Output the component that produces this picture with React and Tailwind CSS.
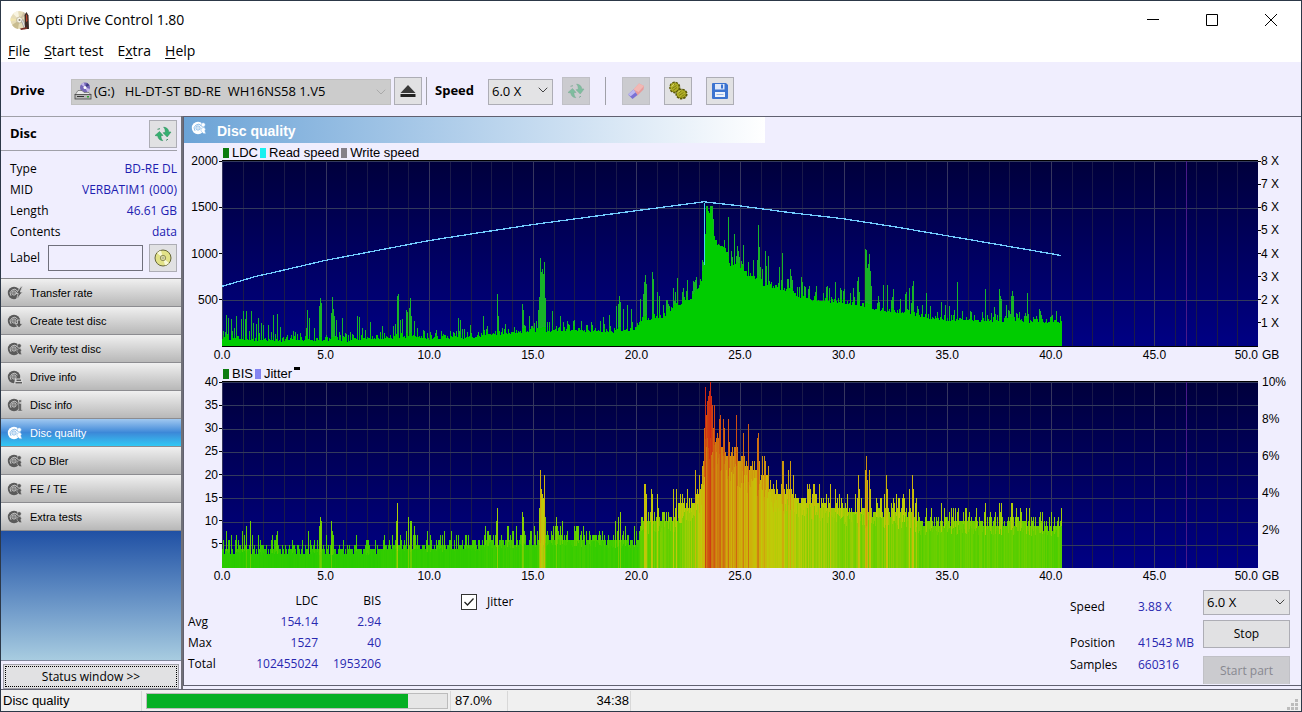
import { ChevronDown } from "lucide-react";

const PLOT_W = 1036;
const PLOT_H = 186;
const LAST_X = 840;

// small seeded generator so the noise floor is the same on every render
function createRandom(seed) {
  let s = seed;
  return () => {
    s = (s * 1664525 + 1013904223) % 4294967296;
    return s / 4294967296;
  };
}

function interpolate(points, x) {
  for (let i = 1; i < points.length; i++) {
    const [x0, y0] = points[i - 1];
    const [x1, y1] = points[i];
    if (x <= x1) return y0 + ((y1 - y0) * (x - x0)) / (x1 - x0);
  }
  return points[points.length - 1][1];
}

const ldcBase = [
  [0, 6], [60, 4], [70, 5], [125, 4], [140, 6], [170, 7], [195, 9], [205, 6], [225, 7], [255, 7], [262, 10], [290, 12],
  [330, 14], [345, 15], [380, 13], [411, 14], [420, 25], [440, 28], [450, 35], [458, 41], [471, 47], [478, 60],
  [482, 80], [483, 112], [484, 134], [489, 134], [491, 112], [494, 102], [503, 98], [507, 80], [518, 78], [525, 70],
  [536, 66], [541, 60], [555, 56], [571, 53], [578, 47], [591, 45], [621, 42], [640, 39], [651, 36], [678, 32],
  [705, 27], [725, 25], [760, 24], [840, 23],
];

const ldcSpikes = [
  [1, 15], [4, 31], [6, 28], [9, 27], [12, 18], [14, 30], [19, 27], [21, 35], [23, 27], [24, 35], [29, 35], [31, 23],
  [34, 22], [36, 28], [39, 23], [41, 21], [46, 21], [51, 31], [55, 32], [58, 19], [71, 15], [84, 18], [85, 36],
  [87, 28], [92, 18], [97, 40], [98, 48], [99, 43], [109, 33], [110, 49], [111, 37], [112, 30], [114, 26], [120, 28],
  [135, 30], [137, 29], [140, 18], [148, 24], [160, 20], [171, 20], [173, 22], [175, 50], [176, 52], [178, 26],
  [180, 27], [184, 36], [185, 34], [187, 38], [188, 48], [189, 30], [192, 25], [201, 16], [208, 14], [234, 15],
  [236, 28], [238, 26], [248, 21], [261, 30], [265, 20], [275, 52], [276, 30], [283, 22], [300, 42], [301, 36],
  [307, 30], [314, 25], [316, 36], [317, 49], [318, 88], [319, 74], [320, 77], [321, 72], [322, 84], [323, 48],
  [325, 24], [330, 35], [338, 30], [345, 25], [352, 26], [381, 29], [387, 31], [394, 40], [396, 42], [397, 50],
  [398, 44], [401, 37], [405, 41], [409, 37], [418, 47], [421, 52], [422, 64], [423, 71], [424, 62], [430, 74],
  [431, 67], [435, 54], [437, 50], [445, 46], [451, 58], [455, 68], [461, 58], [465, 66], [471, 65], [473, 63],
  [480, 86], [481, 84], [484, 138], [486, 136], [490, 141], [491, 128], [506, 130], [512, 113], [516, 96], [521, 102],
  [531, 86], [535, 86], [536, 122], [537, 100], [543, 96], [544, 80], [546, 90], [557, 79], [560, 94], [565, 67],
  [568, 77], [569, 70], [579, 69], [587, 60], [594, 60], [605, 60], [613, 64], [619, 56], [631, 58], [635, 65],
  [636, 69], [643, 98], [644, 97], [645, 78], [646, 82], [647, 92], [648, 75], [649, 60], [656, 50], [661, 61],
  [665, 61], [671, 57], [683, 52], [684, 54], [687, 58], [690, 60], [691, 65], [695, 40], [704, 53], [719, 44],
  [723, 41], [727, 40], [735, 64], [760, 34], [763, 57], [772, 39], [777, 57], [778, 50], [779, 47], [784, 41],
  [786, 36], [789, 50], [790, 55], [791, 50], [805, 53], [806, 32], [819, 31], [830, 31], [834, 35],
];

const bisBase = [
  [0, 4], [155, 4], [160, 5], [255, 5], [262, 6], [315, 6], [330, 6.5], [411, 6], [416, 6], [418, 10], [440, 11], [455, 11],
  [460, 13], [470, 14], [476, 16], [480, 20], [482, 26], [484, 34], [489, 33], [492, 28], [500, 26], [507, 24],
  [520, 24], [530, 21], [540, 20], [550, 17], [570, 16], [575, 15], [600, 14], [620, 13], [650, 12], [690, 12],
  [697, 10], [725, 10], [800, 10], [830, 9], [840, 9.5],
];

const bisSpikes = [
  [1, 6], [4, 8], [6, 6], [9, 7], [14, 7], [20, 8], [22, 7], [24, 9], [28, 10], [30, 7], [36, 7], [50, 7], [54, 7],
  [55, 8], [86, 8], [97, 9], [98, 11], [99, 10], [109, 10], [110, 8], [111, 7], [134, 7], [174, 10], [175, 14],
  [178, 7], [184, 8], [186, 11], [188, 10], [189, 10], [192, 9], [208, 7], [236, 7], [274, 10], [275, 13],
  [286, 9], [300, 12], [301, 11], [312, 9], [317, 13], [318, 21], [319, 17], [320, 16], [321, 15], [322, 20],
  [323, 11], [334, 11], [340, 10], [393, 10], [396, 11], [398, 12], [420, 11], [422, 18], [423, 18], [424, 16],
  [429, 17], [430, 16], [435, 16], [451, 17], [454, 17], [465, 17], [473, 21], [480, 22], [483, 39], [485, 36],
  [486, 37], [487, 38], [488, 40], [489, 37], [490, 35], [492, 35], [498, 33], [501, 32], [502, 30], [506, 32],
  [514, 33], [521, 29], [526, 31], [535, 28], [536, 29], [540, 24], [542, 24], [543, 23], [560, 23], [561, 23],
  [566, 21], [568, 23], [608, 18], [613, 17], [636, 20], [637, 17], [643, 21], [644, 24], [645, 19], [647, 21],
  [648, 17], [662, 16], [664, 20], [665, 17], [671, 15], [674, 16], [687, 17], [690, 20], [691, 17], [694, 15],
  [704, 13], [719, 14], [733, 13], [763, 14], [777, 14], [779, 14], [789, 14], [790, 14], [807, 13],
];

function buildBars(base, spikes, seed, max, noise) {
  const random = createRandom(seed);
  const tall = new Map(spikes);
  const bars = [];
  for (let x = 0; x < LAST_X; x++) {
    const floor = interpolate(base, x);
    bars.push(Math.min(max, Math.max(floor + noise(random(), floor), tall.get(x) ?? 0)));
  }
  return bars;
}

const ldcBars = buildBars(ldcBase, ldcSpikes, 7, 141, (r, floor) => r * 4 + r ** 5 * (5 + floor * 0.2));
const bisBars = buildBars(bisBase, bisSpikes, 21, 40, (r, floor) => r * 2 - 0.4 + r ** 4 * (1 + floor * 0.14)).map(
  Math.floor
);

const heat = [
  [0, [20, 200, 0]],
  [5, [52, 204, 0]],
  [10, [112, 208, 0]],
  [15, [190, 204, 8]],
  [20, [206, 178, 10]],
  [26, [206, 128, 16]],
  [33, [208, 80, 16]],
  [40, [206, 36, 20]],
];

function heatColor(value) {
  const channel = (c) =>
    Math.round(interpolate(heat.map(([v, rgb]) => [v, rgb[c]]), value));
  return `rgb(${channel(0)} ${channel(1)} ${channel(2)})`;
}

const readSpeed =
  "0,126 17,121 34,116 52,112 69,108 86,104 103,100 129,95 155,90 181,85 207,80 258,72 310,64 362,57 414,50 482,41 517,45 569,52 621,58 672,66 724,75 776,84 828,93 839,95";

function PlotFrame({ id, rows, children }) {
  return (
    <svg
      viewBox={`0 0 ${PLOT_W} ${PLOT_H}`}
      preserveAspectRatio="none"
      className="block w-full h-full"
      shapeRendering="crispEdges"
      aria-hidden="true"
    >
      <defs>
        <linearGradient id={id} x1="0" y1="0" x2="0" y2="1">
          <stop offset="0" stopColor="#00003c" />
          <stop offset="1" stopColor="#000084" />
        </linearGradient>
      </defs>
      <rect width={PLOT_W} height={PLOT_H} fill={`url(#${id})`} />
      {Array.from({ length: 50 }, (_, i) => (
        <rect
          key={i}
          x={Math.round((i * PLOT_W) / 50)}
          width="1"
          height={PLOT_H}
          fill={i % 5 === 0 ? "#36365e" : "#1a1a4a"}
        />
      ))}
      {Array.from({ length: rows }, (_, i) => (
        <rect
          key={i}
          y={Math.round((i * PLOT_H) / rows)}
          width={PLOT_W}
          height="1"
          fill="#333a5c"
        />
      ))}
      <rect x="964" width="1" height={PLOT_H} fill="#4a1a88" />
      {children}
    </svg>
  );
}

function LdcPlot() {
  return (
    <PlotFrame id="ldc-bg" rows={4}>
      {ldcBars.map((h, x) => {
        const floor = interpolate(ldcBase, x) + 5;
        const top = Math.round(h);
        const solid = Math.round(Math.min(h, floor));
        return (
          <g key={x}>
            <rect x={x} y={PLOT_H - top} width="1" height={top} fill="#18b428" />
            <rect x={x} y={PLOT_H - solid} width="1" height={solid} fill="#00cc00" />
          </g>
        );
      })}
      <rect x="482" y="42" width="1" height="63" fill="#40d8f0" />
      <polyline points={readSpeed} fill="none" stroke="#72ccff" strokeWidth="1.300" />
    </PlotFrame>
  );
}

function BisPlot() {
  const unit = PLOT_H / 40;
  const random = createRandom(99);
  return (
    <PlotFrame id="bis-bg" rows={8}>
      {bisBars.map((v, x) => {
        const floor = interpolate(bisBase, x);
        const top = Math.round(v * unit);
        const body = Math.min(top, Math.round(floor * unit * (0.7 + random() * 0.25)));
        const bodyValue = v > floor + 4 ? v * 0.9 : floor * (0.76 + random() * 0.24);
        return (
          <g key={x}>
            <rect x={x} y={PLOT_H - top} width="1" height={top} fill={heatColor(v)} />
            <rect x={x} y={PLOT_H - body} width="1" height={body} fill={heatColor(bodyValue)} />
          </g>
        );
      })}
    </PlotFrame>
  );
}

function LeftAxis({ labels }) {
  return (
    <div className="w-[38px] py-px flex flex-col justify-between items-end">
      {labels.map((label, i) => (
        <div key={i} className="h-0 flex items-center gap-px">
          <span>{label}</span>
          {label && <span className="w-[3px] h-px bg-black" />}
        </div>
      ))}
    </div>
  );
}

function RightAxis({ labels, ticks }) {
  return (
    <div className="w-[43px] py-px flex flex-col justify-between items-start">
      {labels.map((label, i) => (
        <div key={i} className="h-0 flex items-center whitespace-nowrap">
          {label && ticks && <span className="w-[3px] h-px bg-black" />}
          <span className={ticks ? "" : "pl-1"}>{label}</span>
        </div>
      ))}
    </div>
  );
}

function BottomAxis() {
  const labels = ["0.0", "5.0", "10.0", "15.0", "20.0", "25.0", "30.0", "35.0", "40.0", "45.0"];
  return (
    <div className="h-4 pl-[38px] flex">
      <div className="flex-1 grid grid-cols-10">
        {labels.map((label) => (
          <div key={label} className="w-0 flex justify-center">
            {label}
          </div>
        ))}
      </div>
      <span className="w-0 flex justify-end">50.0</span>
      <span className="w-[43px] pl-1">GB</span>
    </div>
  );
}

function LegendItem({ color, children }) {
  return (
    <span className="flex items-center gap-[3px]">
      <span className={`w-[6px] h-[10px] ${color}`} />
      {children}
    </span>
  );
}

function DiscIcon({ variant = "search", light }) {
  const dark = light ? "#ffffff" : "#5a5a5a";
  const pale = light ? "#7fb4e4" : "#d4d4d4";
  return (
    <svg viewBox="0 0 16 16" className="w-4 h-4 shrink-0" aria-hidden="true">
      <circle cx="7" cy="8" r="6.200" fill={dark} />
      <path d="M4 10.800A4 4 0 1 1 10.500 6" fill="none" stroke={pale} strokeWidth="0.900" />
      <circle cx="7" cy="8" r="2.100" fill="none" stroke={pale} strokeWidth="0.900" />
      <circle cx="7" cy="8" r="0.700" fill={pale} />
      {variant === "bolt" && (
        <path d="M14 1.500L9 8.500h2.200L9.500 14.500 15.500 7h-2.200l2-5.500z" fill={dark} stroke={pale} strokeWidth="0.800" />
      )}
      {variant === "create" && (
        <path d="M10.500 7v3.500H8.200L12 15l3.800-4.500h-2.300V7z" fill={dark} stroke={pale} strokeWidth="0.800" />
      )}
      {variant === "search" && (
        <>
          <path d="M10 8.500L13 7.200l1.600 2-.8 1.600 1 3-2.400-.2L10 11z" fill={dark} stroke={pale} strokeWidth="0.500" />
          <circle cx="12.200" cy="4.800" r="2.100" fill={dark} stroke={pale} strokeWidth="0.600" />
        </>
      )}
      {variant === "drive" && (
        <>
          <path d="M8 9.500h8V15H7z" fill={pale} />
          <path d="M9.500 10.500h4.500V12H9.500zM8.500 13H15v1.400H8.500z" fill={dark} />
        </>
      )}
      {variant === "info" && (
        <>
          <path d="M11 2.500h4V5.500h-4z" fill={pale} />
          <path d="M11.800 3h2.500v2.300h-2.500zM10.800 6.500h3.500v6.300h1V14h-4.500v-1.200h1V7.700h-1z" fill={dark} stroke={pale} strokeWidth="0.500" />
        </>
      )}
    </svg>
  );
}

function AppIcon() {
  return (
    <svg viewBox="0 0 20 20" className="w-5 h-5" aria-hidden="true">
      <circle cx="9.500" cy="10" r="9" fill="#e6dcb8" />
      <path d="M9.500 10L3 3.800a9 9 0 0 1 5-2.700z" fill="#f8f4e2" />
      <path d="M9.500 10L8 19a9 9 0 0 1-6-4z" fill="#c8bc90" />
      <path d="M9.500 10L.6 11V8z" fill="#f2e6ae" />
      <path d="M9.500 10l4-8 3 2.500z" fill="#cdbfa4" />
      <circle cx="9.500" cy="10" r="3" fill="#f5f3ea" stroke="#b5ab8a" strokeWidth="0.700" />
      <circle cx="9.500" cy="10" r="1" fill="#8c866e" />
      <path d="M11.500 11l1.500-1.500L16 18l-1.500 1z" fill="#e8e8e8" stroke="#777" strokeWidth="0.500" />
      <path d="M14.500 5l2-3 2 3.500L19 19h-4z" fill="#3c2a26" />
      <path d="M16 4.500l1 .5.500 6-1.500 1z" fill="#b8442e" />
      <path d="M10 18.500l7-1.500v2l-6 1z" fill="#7a3026" />
    </svg>
  );
}

function DriveIcon() {
  return (
    <svg viewBox="0 0 18 18" className="w-[18px] h-[18px]" aria-hidden="true">
      <circle cx="11" cy="5.500" r="5" fill="#7668b8" />
      <path d="M11 5.500L7 2.500a5 5 0 0 1 3-2zM11 5.500l5 1.500a5 5 0 0 1-2.500 3z" fill="#c4b8ea" />
      <path d="M11 5.500l2-4.600 2.500 2.300z" fill="#3d3a80" />
      <circle cx="11" cy="5.500" r="1.500" fill="#fff" />
      <path d="M4 8.500h4l2 2h5l2 2.500H1z" fill="#e8e8e8" stroke="#555" strokeWidth="0.600" />
      <rect x="1" y="12.500" width="16" height="4.500" fill="#b8b8b8" stroke="#444" strokeWidth="0.800" />
      <path d="M3 14.500h7" stroke="#333" />
      <rect x="13" y="14" width="2" height="1.500" fill="#2ca82c" />
    </svg>
  );
}

function RefreshIcon() {
  return (
    <svg viewBox="0 0 18 18" className="w-[18px] h-[18px]" aria-hidden="true">
      <path d="M1 10.500l4.500-4 3.500 4H7c-.2 2 .4 3.600 1.800 5.200C5.600 15.300 4 13.500 3.800 11z" fill="#36b070" stroke="#2a8a5a" strokeWidth="0.500" />
      <path d="M17 7l-3.800 5L9 7.700l2.200-.2C11.400 5.500 11 3.700 9.600 2.100c3.200.4 5 2.200 5.200 4.800z" fill="#36b070" stroke="#2a8a5a" strokeWidth="0.500" />
      <path d="M3.500 4.300L6 3.700M14 14.200l-2 1.200" stroke="#3f8f68" />
    </svg>
  );
}

function EraserIcon() {
  return (
    <svg viewBox="0 0 18 18" className="w-[18px] h-[18px]" aria-hidden="true">
      <path d="M6.500 7.500l5.500-6 5 2.500-.5 3.500-6 6z" fill="#e89c9c" />
      <path d="M12 1.500l5 2.500-5.500 6-5-2.500z" fill="#f2b8b4" />
      <path d="M1 12.500l5.500-5 4 5.500-5 4z" fill="#7a70d4" />
      <path d="M1 12.500l5.500-5 2.200 2.700-5 4z" fill="#bdb8f0" />
    </svg>
  );
}

function GearsIcon() {
  return (
    <svg viewBox="0 0 20 20" className="w-5 h-5" aria-hidden="true">
      <ellipse cx="6.800" cy="6.500" rx="4.700" ry="5" fill="#8e8d18" stroke="#5c5a08" strokeWidth="1.800" strokeDasharray="2.400 0.900" />
      <ellipse cx="6.500" cy="6.200" rx="4" ry="4.200" fill="#b0af26" />
      <path d="M4 4.500l3-1.500M4 7.500l4.500-3M5 9.500l4-3" stroke="#807e14" />
      <ellipse cx="13.500" cy="13" rx="5.200" ry="4.500" fill="#8e8d18" stroke="#5c5a08" strokeWidth="1.800" strokeDasharray="2.400 0.900" />
      <ellipse cx="13.200" cy="12.700" rx="4.400" ry="3.700" fill="#b0af26" />
      <path d="M10.500 12l3-2M11 14.500l4.500-3M13.500 15.500l3-2" stroke="#807e14" />
      <path d="M3.800 5.500l2-2.300M10 11.500l2-2" stroke="#e4e37a" />
    </svg>
  );
}

function SaveIcon() {
  return (
    <svg viewBox="0 0 16 16" className="w-4 h-4" aria-hidden="true">
      <path d="M0 1a1 1 0 0 1 1-1h13l2 2v13a1 1 0 0 1-1 1H1a1 1 0 0 1-1-1z" fill="#3c74d0" />
      <rect x="3" y="1" width="9.500" height="5.500" fill="#dfe9fa" />
      <rect x="9" y="1.500" width="2" height="4" fill="#3c74d0" />
      <rect x="3" y="9" width="10" height="5" fill="#eef3fb" />
      <path d="M4.500 11.500h7" stroke="#9ab6e4" />
    </svg>
  );
}

function GoldDiscIcon() {
  return (
    <svg viewBox="0 0 18 18" className="w-[18px] h-[18px]" aria-hidden="true">
      <circle cx="9" cy="9" r="8" fill="#e2e288" stroke="#66663a" />
      <path d="M9 9L3 4a8 8 0 0 1 4-2.500zM9 9l6 5a8 8 0 0 1-4 2.500z" fill="#f8f8d8" />
      <circle cx="9" cy="9" r="2.700" fill="#e9e9a8" stroke="#77774a" strokeWidth="0.800" />
      <circle cx="9" cy="9" r="1" fill="#fff" stroke="#66663a" strokeWidth="0.500" />
    </svg>
  );
}

function IconButton({ label, disabled, children }) {
  return (
    <button
      aria-label={label}
      disabled={disabled}
      className="w-7 h-7 shrink-0 flex items-center justify-center border border-[#adadb5] bg-[#e1e1e3] disabled:bg-[#cbcbcf] disabled:border-[#c0c0c6]"
    >
      {children}
    </button>
  );
}

function SpeedSelect({ label, className }) {
  return (
    <div className={`relative ${className}`}>
      <select
        aria-label={label}
        defaultValue="6.0 X"
        className="appearance-none w-full h-full pl-[3px] border border-[#adadb5] bg-[#e3e3e5] text-[13px]"
      >
        <option>4.0 X</option>
        <option>6.0 X</option>
        <option>8.0 X</option>
      </select>
      <ChevronDown className="absolute right-0.5 top-1 w-4 h-4 text-[#444] pointer-events-none" strokeWidth={1.5} />
    </div>
  );
}

const menuItems = [
  { before: "", key: "F", after: "ile" },
  { before: "", key: "S", after: "tart test" },
  { before: "E", key: "x", after: "tra" },
  { before: "", key: "H", after: "elp" },
];

const windowButtons = [
  { label: "Minimize", path: "M0 5.500h12" },
  { label: "Maximize", path: "M.5.5h11v11H.5z" },
  { label: "Close", path: "M0 0l12 12M12 0L0 12" },
];

const discInfo = [
  ["Type", "BD-RE DL"],
  ["MID", "VERBATIM1 (000)"],
  ["Length", "46.61 GB"],
  ["Contents", "data"],
];

const tests = [
  { name: "Transfer rate", icon: "bolt" },
  { name: "Create test disc", icon: "create" },
  { name: "Verify test disc", icon: "search" },
  { name: "Drive info", icon: "drive" },
  { name: "Disc info", icon: "info" },
  { name: "Disc quality", icon: "search", active: true },
  { name: "CD Bler", icon: "search" },
  { name: "FE / TE", icon: "search" },
  { name: "Extra tests", icon: "search" },
];

const stats = [
  ["Avg", "154.14", "2.94"],
  ["Max", "1527", "40"],
  ["Total", "102455024", "1953206"],
];

function Header() {
  return (
    <header className="bg-white">
      <div className="h-[37px] pl-[9px] pr-px flex items-center">
        <AppIcon />
        <h1 className="pl-[5px] text-[14px] flex-1">Opti Drive Control 1.80</h1>
        {windowButtons.map(({ label, path }) => (
          <button key={label} aria-label={label} className="w-[59px] h-full flex items-center justify-center">
            <svg viewBox="0 0 12 12" className="w-3 h-3" aria-hidden="true">
              <path d={path} fill="none" stroke="#000" />
            </svg>
          </button>
        ))}
      </div>
      <nav className="h-6 pl-[7px] flex items-center gap-[14px] text-[14px]">
        {menuItems.map((item) => (
          <button key={item.key}>
            {item.before}
            <span className="underline underline-offset-2">{item.key}</span>
            {item.after}
          </button>
        ))}
      </nav>
    </header>
  );
}

function Toolbar() {
  return (
    <div className="h-[54px] pt-1 pl-[9px] flex items-center">
      <label htmlFor="drive" className="w-[61px] font-bold text-[13px]">
        Drive
      </label>
      <div className="relative w-[320px] h-[26px]">
        <select
          id="drive"
          className="appearance-none w-full h-full pl-[22px] border border-[#c0c0c0] bg-[#cccccc] text-[13px] whitespace-pre"
        >
          <option>{"(G:)\u00a0\u00a0\u00a0HL-DT-ST BD-RE\u00a0\u00a0WH16NS58 1.V5"}</option>
        </select>
        <span className="absolute left-[3px] top-1 pointer-events-none">
          <DriveIcon />
        </span>
        <ChevronDown className="absolute right-0.5 top-[6px] w-4 h-4 text-[#999] pointer-events-none" strokeWidth={1} />
      </div>
      <div className="pl-[3px] pr-1 flex">
        <IconButton label="Eject">
          <svg viewBox="0 0 16 14" className="w-4 h-[14px]" aria-hidden="true">
            <path d="M8 1l7.500 8H.5z" fill="#3a3a3a" />
            <rect x="0.500" y="10" width="15" height="3" fill="#222" />
          </svg>
        </IconButton>
      </div>
      <span className="w-px h-7 bg-[#a0a0a8]" />
      <span className="pl-2 w-[61px] font-bold text-[13px]">Speed</span>
      <SpeedSelect label="Drive speed" className="w-[65px] h-[26px]" />
      <div className="pl-[9px] pr-[15px]">
        <IconButton label="Refresh speed" disabled>
          <span className="opacity-50">
            <RefreshIcon />
          </span>
        </IconButton>
      </div>
      <span className="w-px h-7 bg-[#a0a0a8]" />
      <div className="pl-[16px] flex gap-[14px]">
        <IconButton label="Erase disc" disabled>
          <EraserIcon />
        </IconButton>
        <IconButton label="Settings">
          <GearsIcon />
        </IconButton>
        <IconButton label="Save">
          <SaveIcon />
        </IconButton>
      </div>
    </div>
  );
}

function Sidebar() {
  return (
    <aside className="w-[180px] shrink-0 flex flex-col border-t border-[#a0a0a8]">
      <div className="h-[34px] mr-1 pl-[9px] flex items-center justify-between border-b border-[#a0a0a8]">
        <h2 className="font-bold text-[13px]">Disc</h2>
        <IconButton label="Refresh disc">
          <RefreshIcon />
        </IconButton>
      </div>
      <dl className="pt-[7px] pl-[9px] pr-1 text-[12px] leading-[21px]">
        {discInfo.map(([term, value]) => (
          <div key={term} className="flex justify-between">
            <dt>{term}</dt>
            <dd className="text-[#2020b0]">{value}</dd>
          </div>
        ))}
      </dl>
      <div className="pt-0.5 pl-[9px] pr-1 pb-[6px] flex items-center text-[12px]">
        <label htmlFor="label" className="w-[38px]">
          Label
        </label>
        <input id="label" className="w-[95px] h-[26px] px-1 border border-[#70707c] bg-[#f0eefe]" />
        <span className="flex-1" />
        <IconButton label="Write label">
          <GoldDiscIcon />
        </IconButton>
      </div>
      <nav className="border-t border-[#88888c]">
        {tests.map((test) => (
          <button
            key={test.name}
            className={`w-full h-7 pl-[6px] pt-px flex items-center gap-[7px] border-b border-[#8c8c90] font-['Liberation_Sans',Arial,sans-serif] text-[11px] ${
              test.active
                ? "text-white bg-linear-to-b from-[#a0c8f0] via-[#3c88d8] to-[#30c8f4]"
                : "bg-linear-to-b from-[#f0f0f0] to-[#b8b8b8]"
            }`}
          >
            <DiscIcon variant={test.icon} light={test.active} />
            {test.name}
          </button>
        ))}
      </nav>
      <div className="flex-1 min-h-16 bg-linear-to-b from-[#2050a4] to-[#a8cce0] border-b border-[#80889c]" />
      <div className="px-0.5 pt-0.5">
        <button className="w-full h-[25px] border border-[#a0a0a8] bg-[#e1e1e3] p-px text-[12px]">
          <span className="h-full flex items-center justify-center border border-dotted border-black">
            Status window &gt;&gt;
          </span>
        </button>
      </div>
    </aside>
  );
}

function Results() {
  return (
    <div className="pt-[6px] pl-1 flex text-[12px]">
      <table className="h-21 leading-[21px]">
        <thead>
          <tr>
            <td className="w-12" />
            <th className="w-[82px] p-0 font-normal text-right">LDC</th>
            <th className="w-[63px] p-0 font-normal text-right">BIS</th>
          </tr>
        </thead>
        <tbody>
          {stats.map(([name, ldc, bis]) => (
            <tr key={name}>
              <th className="p-0 font-normal text-left">{name}</th>
              <td className="p-0 text-right text-[#2828b0]">{ldc}</td>
              <td className="p-0 text-right text-[#2828b0]">{bis}</td>
            </tr>
          ))}
        </tbody>
      </table>
      <label className="pl-20 pt-1 h-5 flex items-center gap-[10px]">
        <span className="relative w-4 h-4">
          <input type="checkbox" defaultChecked className="peer appearance-none block w-4 h-4 border border-[#333] bg-white" />
          <svg viewBox="0 0 16 16" className="absolute inset-0 hidden peer-checked:block pointer-events-none">
            <path d="M3.500 8l3 3 6-6.500" fill="none" stroke="#222" strokeWidth="1.300" />
          </svg>
        </span>
        Jitter
      </label>
      <div className="flex-1" />
      <dl className="pt-1.5 grid grid-cols-[68px_65px] grid-rows-[36px_22px_22px] leading-[22px] whitespace-nowrap">
        <dt>Speed</dt>
        <dd className="text-[#2828b0]">3.88 X</dd>
        <dt>Position</dt>
        <dd className="text-[#2828b0]">41543 MB</dd>
        <dt>Samples</dt>
        <dd className="text-[#2828b0]">660316</dd>
      </dl>
      <div className="w-[87px] mr-[11px] flex flex-col">
        <SpeedSelect label="Test speed" className="h-[25px]" />
        <button className="mt-[5px] h-7 border border-[#adadb5] bg-[#e1e1e3]">Stop</button>
        <button disabled className="mt-2 h-7 border border-b-0 border-[#c0c0c6] bg-[#cbcbcf] text-[#888890]">
          Start part
        </button>
      </div>
    </div>
  );
}

function QualityPanel() {
  return (
    <main className="flex-1 min-w-0 pb-[3px]">
      <div className="h-full border-t border-b border-l border-[#606070]">
        <div className="w-[52%] h-[26px] pl-[7px] pb-1 flex items-center gap-[10px] bg-linear-to-r from-[#6ba3d6] to-white text-white">
          <DiscIcon light />
          <h2 className="pt-1.5 font-['Liberation_Sans',Arial,sans-serif] font-bold text-[14px]">Disc quality</h2>
        </div>
        <div className="font-['Liberation_Sans',Arial,sans-serif] text-[12px] leading-4">
          <div className="h-[17px] pl-[39px] pt-[3px] flex gap-[2px] text-[13px] leading-[14px]">
            <LegendItem color="bg-[#0c7c10]">LDC</LegendItem>
            <LegendItem color="bg-[#18f0f0]">Read speed</LegendItem>
            <LegendItem color="bg-[#848088]">Write speed</LegendItem>
          </div>
          <div className="flex h-[187px]">
            <LeftAxis labels={["2000", "1500", "1000", "500", ""]} />
            <div className="flex-1 min-w-0 border-t border-b border-black">
              <LdcPlot />
            </div>
            <RightAxis ticks labels={["8 X", "7 X", "6 X", "5 X", "4 X", "3 X", "2 X", "1 X", ""]} />
          </div>
          <BottomAxis />
          <div className="h-[18px] pl-[39px] pt-1 flex gap-[2px] text-[13px] leading-[14px]">
            <LegendItem color="bg-[#0c7c10]">BIS</LegendItem>
            <LegendItem color="bg-[#8484f0]">Jitter</LegendItem>
            <span className="w-[6px] h-[3px] bg-black" />
          </div>
          <div className="flex h-[187px]">
            <LeftAxis labels={["40", "35", "30", "25", "20", "15", "10", "5", ""]} />
            <div className="flex-1 min-w-0 border-t border-black">
              <BisPlot />
            </div>
            <RightAxis labels={["10%", "8%", "6%", "4%", "2%", ""]} />
          </div>
          <BottomAxis />
        </div>
        <Results />
      </div>
    </main>
  );
}

function StatusBar() {
  return (
    <footer className="h-[22px] pl-0.5 pt-px flex items-center border-t border-[#606070] bg-[#f0f0f0] font-['Liberation_Sans',Arial,sans-serif] text-[13px]">
      <span className="w-[139px] h-full flex items-center border-r border-[#d8d8d8]">Disc quality</span>
      <div
        role="progressbar"
        aria-label="Test progress"
        aria-valuenow={87}
        className="ml-1 w-[302px] h-4 border border-[#bcbcbc] bg-[#e6e6e6]"
      >
        <div className="h-full bg-[#06b025]" style={{ width: "87%" }} />
      </div>
      <span className="ml-0.5 pl-1 w-[58px] h-full flex items-center border-x border-[#d8d8d8]">87.0%</span>
      <span className="w-[123px] pr-px h-full flex items-center justify-end border-r border-[#d8d8d8]">34:38</span>
      <span className="flex-1" />
      <svg viewBox="0 0 12 12" className="w-3 h-3 mr-0.5 self-end" aria-hidden="true">
        <path d="M8 0h3v3H8zM4 4h3v3H4zM8 4h3v3H8zM0 8h3v3H0zM4 8h3v3H4zM8 8h3v3H8z" fill="#bcbcbc" />
      </svg>
    </footer>
  );
}

export default function App() {
  return (
    <div className="min-h-screen flex flex-col border border-[#2c3848] bg-[#f0eefe] text-black font-['Open_Sans','Noto_Sans',sans-serif]">
      <Header />
      <Toolbar />
      <div className="flex-1 flex">
        <Sidebar />
        <div className="w-0.5 bg-[#707078]" />
        <QualityPanel />
      </div>
      <StatusBar />
    </div>
  );
}
